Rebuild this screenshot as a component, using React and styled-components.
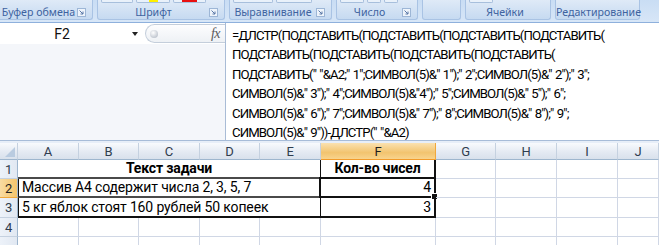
import styled, { createGlobalStyle } from 'styled-components';

const GlobalStyle = createGlobalStyle`
  body {
    margin: 0;
    background: #ffffff;
    font-family: Roboto, 'Liberation Sans', sans-serif;
  }
`;

const Page = styled.div`
  width: 659px;
  height: 245px;
  overflow: hidden;
  display: flex;
  flex-direction: column;
`;

/* ---------- ribbon ---------- */

const Ribbon = styled.div`
  height: 23px;
  flex: none;
  box-sizing: border-box;
  display: flex;
  align-items: flex-start;
  gap: 4px;
  background: linear-gradient(#c9ddf4, #d7e6f7);
  border-bottom: 1px solid #8eb0dc;
`;

const Group = styled.div`
  width: ${(p) => p.$w}px;
  height: 20px;
  flex: none;
  box-sizing: border-box;
  display: flex;
  flex-direction: column;
  background: linear-gradient(#dfeaf7, #c6daf1);
  border: 1px solid #a9c3e4;
  border-top: none;
  border-radius: 0 0 3px 3px;
  ${(p) => p.$first && 'border-left: none; border-radius: 0 0 3px 0;'}
`;

const Stubs = styled.div`
  height: 5px;
  display: flex;
  gap: 3px;
  padding-left: 3px;
`;

const Stub = styled.div`
  width: ${(p) => p.$w}px;
  height: 3px;
  box-sizing: border-box;
  border: 1px solid #a7bfdc;
  border-top: none;
  border-radius: 0 0 2px 2px;
  background: #e9f1fa;
  display: flex;
  justify-content: center;
  align-items: flex-end;
`;

const Swatch = styled.div`
  width: ${(p) => p.$w}px;
  height: 2px;
  background: ${(p) => p.$c};
`;

const GroupLabel = styled.div`
  flex: 1;
  display: flex;
  align-items: center;
  padding-right: 6px;
  font-family: 'Noto Sans', 'DejaVu Sans', sans-serif;
  font-size: 10.6px;
  color: #3e63a0;
`;

const LabelText = styled.span`
  flex: 1;
  text-align: center;
  white-space: nowrap;
`;

function Launcher() {
  return (
    <svg width="9" height="9" viewBox="0 0 9 9">
      <rect x="0.5" y="0.5" width="8" height="8" fill="#eef4fb" stroke="#9db6d6" />
      <path d="M2.5 2.5 L6 6 M6 3.5 V6 H3.5" stroke="#5877a6" strokeWidth="1" fill="none" />
    </svg>
  );
}

/* ---------- formula bar ---------- */

const FormulaBar = styled.div`
  height: 118px;
  flex: none;
  display: flex;
  box-sizing: border-box;
  border-bottom: 1px solid #a7bcd8;
`;

const LeftPane = styled.div`
  width: 225px;
  flex: none;
  display: flex;
  flex-direction: column;
  background: #f4f6fa;
`;

const NameRow = styled.div`
  height: 21px;
  display: flex;
  align-items: center;
  background: #ffffff;
`;

const NameBox = styled.div`
  width: 143px;
  height: 21px;
  box-sizing: border-box;
  display: flex;
  align-items: center;
  background: #ffffff;
`;

const NameText = styled.span`
  width: 124px;
  text-align: center;
  font-size: 14px;
  color: #111;
`;

const DropArrow = styled.span`
  width: 0;
  height: 0;
  margin-left: 8px;
  border-left: 3.5px solid transparent;
  border-right: 3.5px solid transparent;
  border-top: 4px solid #222;
`;

const Splitter = styled.div`
  flex: 1;
  height: 19px;
  margin-left: 2px;
  box-sizing: border-box;
  display: flex;
  align-items: center;
  justify-content: space-between;
  padding: 0 5px 0 4px;
  border: 1px solid #c4cedb;
  border-right: none;
  border-radius: 10px 0 0 10px;
  background: linear-gradient(#fdfdfe, #eef1f5);
`;

const Knob = styled.span`
  width: 8px;
  height: 8px;
  border-radius: 50%;
  background: radial-gradient(circle at 40% 35%, #ffffff, #c3c9d2 70%, #9ea7b4);
`;

const Fx = styled.span`
  font-family: 'Liberation Serif', 'DejaVu Serif', serif;
  font-style: italic;
  font-size: 14px;
  color: #5a5a5a;
  letter-spacing: -0.5px;
`;

const FormulaText = styled.div`
  flex: 1;
  box-sizing: border-box;
  padding: 3px 0 0 6px;
  background: #ffffff;
  border-left: 1px solid #a9bcd6;
  font-size: 13.2px;
  letter-spacing: -0.9px;
  word-spacing: 1px;
  line-height: 19.4px;
  color: #000;
`;

const FormulaLine = styled.div`
  white-space: pre;
`;

const Spacer = styled.div`
  height: 2px;
  flex: none;
  background: #e7eef8;
`;

/* ---------- sheet ---------- */

const Sheet = styled.div`
  display: grid;
  grid-template-columns: 18px 61px 60px 61px 60px 61px 115px 60px 61px 61px 41px;
  grid-template-rows: 17px 19px 19px 20px 19px 19px;
  font-size: 14px;
  letter-spacing: -0.15px;
`;

const ColHead = styled.div`
  box-sizing: border-box;
  display: flex;
  align-items: center;
  justify-content: center;
  font-size: 13px;
  color: ${(p) => (p.$active ? '#1e1e1e' : '#2f3c4e')};
  background: ${(p) =>
    p.$active
      ? 'linear-gradient(#fae1b0, #f2c46f 60%, #f8d48d)'
      : 'linear-gradient(#f8fafd, #e3e9f2 60%, #d9e1ec)'};
  border-right: 1px solid ${(p) => (p.$active ? '#f0a83c' : '#c5d1e0')};
  border-bottom: 1px solid ${(p) => (p.$active ? '#f29b2a' : '#9eb6ce')};
`;

const Corner = styled(ColHead)`
  justify-content: flex-end;
  align-items: flex-end;
  padding: 0 2px 2px 0;
`;

const CornerMark = styled.span`
  width: 0;
  height: 0;
  border-left: 10px solid transparent;
  border-bottom: 10px solid #b9cbe0;
`;

const RowHead = styled.div`
  box-sizing: border-box;
  display: flex;
  align-items: center;
  justify-content: center;
  font-size: 13px;
  color: ${(p) => (p.$active ? '#1e1e1e' : '#2f3c4e')};
  background: ${(p) =>
    p.$active
      ? 'linear-gradient(90deg, #f9dca2, #f4c56c)'
      : 'linear-gradient(90deg, #edf2f9, #e1e8f2)'};
  border-right: 1px solid #9eb6ce;
  border-bottom: 1px solid ${(p) => (p.$active ? '#f0a83c' : '#c5d1e0')};
`;

const Cell = styled.div`
  position: relative;
  box-sizing: border-box;
  display: flex;
  align-items: flex-end;
  justify-content: ${(p) => p.$align || 'flex-start'};
  padding: 0 3px 1px 3px;
  white-space: nowrap;
  font-weight: ${(p) => (p.$bold ? 700 : 400)};
  grid-column: span ${(p) => p.$span || 1};
  border-right: ${(p) => p.$right || '1px solid #d0d7e5'};
  border-bottom: ${(p) => p.$bottom || '1px solid #d0d7e5'};
  ${(p) => p.$left && `border-left: ${p.$left};`}
`;

const Selection = styled.div`
  position: absolute;
  left: -2px;
  top: -2px;
  right: -2px;
  bottom: -2px;
  border: 2px solid #111;
  pointer-events: none;
`;

const FillHandle = styled.span`
  position: absolute;
  right: -4px;
  bottom: -4px;
  width: 5px;
  height: 5px;
  background: #111;
  border: 1px solid #fff;
`;

const groups = [
  { w: 93, label: 'Буфер обмена', first: true },
  {
    w: 128,
    label: 'Шрифт',
    stubs: [
      { w: 32 },
      { w: 34, swatch: '#ffef00', sw: 9 },
      { w: 33, swatch: '#e81010', sw: 15 },
    ],
  },
  { w: 103, label: 'Выравнивание', stubs: [{ w: 40 }, { w: 36 }] },
  { w: 82, label: 'Число', stubs: [{ w: 24 }, { w: 14 }, { w: 14 }] },
  { w: 39, label: '', noLauncher: true },
  { w: 86, label: 'Ячейки', noLauncher: true, stubs: [{ w: 24 }] },
  { w: 85, label: 'Редактирование', noLauncher: true },
];

const formula = [
  '=ДЛСТР(ПОДСТАВИТЬ(ПОДСТАВИТЬ(ПОДСТАВИТЬ(ПОДСТАВИТЬ(',
  'ПОДСТАВИТЬ(ПОДСТАВИТЬ(ПОДСТАВИТЬ(ПОДСТАВИТЬ(',
  'ПОДСТАВИТЬ(" "&A2;" 1";СИМВОЛ(5)&" 1");" 2";СИМВОЛ(5)&" 2");" 3";',
  'СИМВОЛ(5)&" 3");" 4";СИМВОЛ(5)&"4");" 5";СИМВОЛ(5)&" 5");" 6";',
  'СИМВОЛ(5)&" 6");" 7";СИМВОЛ(5)&" 7");" 8";СИМВОЛ(5)&" 8");" 9";',
  'СИМВОЛ(5)&" 9"))-ДЛСТР(" "&A2)',
];

const columns = ['A', 'B', 'C', 'D', 'E', 'F', 'G', 'H', 'I', 'J'];
const tail = ['G', 'H', 'I', 'J'];

const thick = '2px solid #4a4a4a';
const black = '2px solid #111';
const thin = '1px solid #111';

function App() {
  return (
    <Page>
      <GlobalStyle />

      <Ribbon>
        {groups.map((g) => (
          <Group key={g.w + g.label} $w={g.w} $first={g.first}>
            <Stubs>
              {(g.stubs || []).map((s, i) => (
                <Stub key={i} $w={s.w}>
                  {s.swatch && <Swatch $c={s.swatch} $w={s.sw} />}
                </Stub>
              ))}
            </Stubs>
            <GroupLabel>
              <LabelText>{g.label}</LabelText>
              {!g.noLauncher && <Launcher />}
            </GroupLabel>
          </Group>
        ))}
      </Ribbon>

      <FormulaBar>
        <LeftPane>
          <NameRow>
            <NameBox>
              <NameText>F2</NameText>
              <DropArrow />
            </NameBox>
            <Splitter>
              <Knob />
              <Fx>fx</Fx>
            </Splitter>
          </NameRow>
        </LeftPane>
        <FormulaText>
          {formula.map((line, i) => (
            <FormulaLine key={i}>{line}</FormulaLine>
          ))}
        </FormulaText>
      </FormulaBar>

      <Spacer />

      <Sheet>
        <Corner>
          <CornerMark />
        </Corner>
        {columns.map((c) => (
          <ColHead key={c} $active={c === 'F'}>
            {c}
          </ColHead>
        ))}

        <RowHead>1</RowHead>
        <Cell $span={5} $align="center" $bold $right={thin} $bottom={thick}>
          Текст задачи
        </Cell>
        <Cell $align="center" $bold $right={black} $bottom={thick}>
          Кол-во чисел
        </Cell>
        {tail.map((c) => (
          <Cell key={c} />
        ))}

        <RowHead $active>2</RowHead>
        <Cell $span={5} $left={thin} $right={thin} $bottom={thick}>
          Массив А4 содержит числа 2, 3, 5, 7
        </Cell>
        <Cell $align="flex-end" $right={black} $bottom={thick}>
          4
          <Selection>
            <FillHandle />
          </Selection>
        </Cell>
        {tail.map((c) => (
          <Cell key={c} />
        ))}

        <RowHead>3</RowHead>
        <Cell $span={5} $left={thin} $right={thin} $bottom={black}>
          5 кг яблок стоят 160 рублей 50 копеек
        </Cell>
        <Cell $align="flex-end" $right={black} $bottom={black}>
          3
        </Cell>
        {tail.map((c) => (
          <Cell key={c} />
        ))}

        <RowHead>4</RowHead>
        {columns.map((c) => (
          <Cell key={`${c}4`} />
        ))}

        {/* row 5 only peeks in below the fold, its number is not visible */}
        <RowHead />
        {columns.map((c) => (
          <Cell key={`${c}5`} />
        ))}
      </Sheet>
    </Page>
  );
}

export default App;
